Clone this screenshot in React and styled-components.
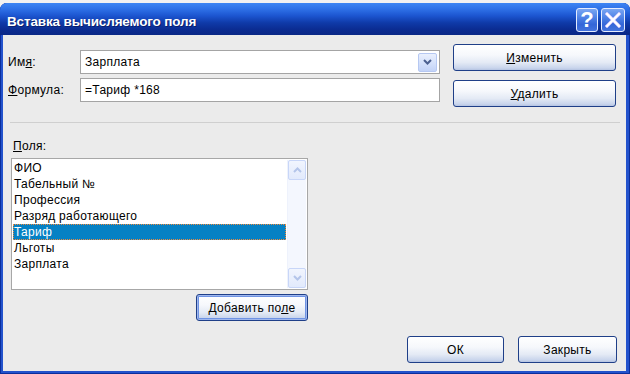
import React from "react";
import styled, { createGlobalStyle } from "styled-components";

const GlobalStyle = createGlobalStyle`
  html, body { margin: 0; padding: 0; background: #f2f2f2; }
  body { font-family: "Liberation Sans", "DejaVu Sans", sans-serif; font-size: 12px; letter-spacing: 0.3px; color: #000; }
  * { box-sizing: border-box; }
`;

const Window = styled.div`
  width: 630px;
  height: 371px;
  margin-top: 3px;
  display: flex;
  flex-direction: column;
  background: #2352cc;
  border-radius: 7px 7px 0 0;
  overflow: hidden;
  box-shadow: inset 1px 0 0 #0b2e9c, inset -1px 0 0 #0b2e9c, inset 0 -1px 0 #0b2e9c;
`;

const TitleBar = styled.div`
  height: 32px;
  flex: none;
  display: flex;
  align-items: flex-start;
  padding: 5px 5px 0 7px;
  background: linear-gradient(to bottom, #3d86f4 0%, #2f72e8 18%, #1c55d0 40%, #0f3aa8 62%, #0b2c92 82%, #0a2886 100%);
`;

const Title = styled.div`
  flex: 1;
  padding-top: 6px;
  font-family: "Liberation Sans", "DejaVu Sans", sans-serif;
  font-weight: bold;
  font-size: 13.5px;
  color: #fff;
  letter-spacing: -0.15px;
  text-shadow: 1px 1px 0 #0a1f6e;
`;

const CaptionButton = styled.div`
  width: ${(p) => p.$w}px;
  height: 24px;
  margin-left: ${(p) => p.$gap}px;
  border: 1px solid #e4ecff;
  border-radius: 3px;
  background: linear-gradient(to bottom, #7aa6f2 0%, #5286e8 35%, #3466d8 70%, #4373de 100%);
  display: flex;
  align-items: center;
  justify-content: center;
  color: #fff;
  font-family: "Liberation Sans", sans-serif;
  font-weight: bold;
  font-size: 22px;
  letter-spacing: 0;
  line-height: 1;
`;

const Body = styled.div`
  flex: 1;
  margin: 0 4px 3px 3px;
  background: #ebebeb;
  display: flex;
  flex-direction: column;
`;

const TopSection = styled.div`
  display: flex;
  gap: 13px;
  padding: 9px 10px 0 5px;
`;

const FieldGrid = styled.div`
  margin-top: 6px;
  display: grid;
  grid-template-columns: 72px 360px;
  grid-auto-rows: 24px;
  row-gap: 4px;
  align-items: center;
`;

const Label = styled.label`
  white-space: nowrap;
`;

const InputBox = styled.div`
  height: 24px;
  border: 1px solid #a4a4a4;
  background: #fff;
  display: flex;
  align-items: center;
  padding-left: 4px;
`;

const InputText = styled.span`
  flex: 1;
`;

const DropButton = styled.div`
  width: 19px;
  height: 19px;
  margin-right: 2px;
  border: 1px solid #b6c8f2;
  border-radius: 2px;
  background: linear-gradient(to bottom, #eaf0fd 0%, #d6e2fb 50%, #c3d3f7 100%);
  display: flex;
  align-items: center;
  justify-content: center;
`;

const ButtonColumn = styled.div`
  width: 163px;
  display: flex;
  flex-direction: column;
  gap: 9px;
`;

const Button = styled.button`
  width: ${(p) => p.$w || 163}px;
  height: 27px;
  padding: 0;
  border: 1px solid #1f3f88;
  border-radius: 3px;
  background: linear-gradient(to bottom, #ffffff 0%, #f6f8fc 40%, #e4eaf5 70%, #c9d5ec 92%, #b5c4e2 100%);
  font-family: "Liberation Sans", "DejaVu Sans", sans-serif;
  font-size: 12px;
  letter-spacing: 0.3px;
  color: #000;
  box-shadow: ${(p) => (p.$default ? "inset 0 0 0 1px #9fb7ee, inset 0 0 0 2px #6f93e3" : "none")};
`;

const Separator = styled.div`
  margin: 15px 6px 0 7px;
  height: 1px;
  background: #cfcfcf;
`;

const LowerSection = styled.div`
  padding-left: 8px;
  display: flex;
  flex-direction: column;
`;

const SectionLabel = styled.div`
  margin-top: 16px;
  line-height: 14px;
  padding-left: 2px;
`;

const ListColumn = styled.div`
  width: 297px;
  margin-top: 5px;
  display: flex;
  flex-direction: column;
  align-items: flex-end;
  gap: 4px;
`;

const ListBox = styled.div`
  width: 297px;
  height: 132px;
  border: 1px solid #a7a7a7;
  background: #fff;
  padding: 1px;
  display: flex;
  gap: 1px;
`;

const Items = styled.div`
  width: 273px;
  display: flex;
  flex-direction: column;
`;

const Item = styled.div`
  height: 16px;
  line-height: 16px;
  padding-left: 1px;
  white-space: nowrap;
  background: ${(p) => (p.$selected ? "#0681c4" : "transparent")};
  color: ${(p) => (p.$selected ? "#fff" : "#000")};
  outline: ${(p) => (p.$selected ? "1px dotted #f08a3c" : "none")};
  outline-offset: -1px;
`;

const ScrollBar = styled.div`
  width: 19px;
  background: #f4f7fe;
  border-left: 1px solid #eef2fc;
  display: flex;
  flex-direction: column;
  justify-content: space-between;
`;

const ScrollButton = styled.div`
  height: 20px;
  border: 1px solid #c8d6f8;
  border-radius: 2px;
  background: linear-gradient(to bottom, #f1f5fe 0%, #e2eafc 100%);
  display: flex;
  align-items: center;
  justify-content: center;
`;

const Footer = styled.div`
  margin-top: auto;
  display: flex;
  justify-content: flex-end;
  gap: 14px;
  padding: 0 9px 8px 0;
`;

const Chevron = ({ up, color }) => (
  <svg width="9" height="6" viewBox="0 0 9 6">
    <path
      d={up ? "M1 5 L4.5 1.5 L8 5" : "M1 1 L4.5 4.5 L8 1"}
      fill="none"
      stroke={color}
      strokeWidth="2"
    />
  </svg>
);

const CloseIcon = () => (
  <svg width="16" height="16" viewBox="0 0 16 16">
    <path d="M2 2 L14 14 M14 2 L2 14" stroke="#d8c8ff" strokeWidth="3.2" strokeLinecap="square" />
    <path d="M2 2 L14 14 M14 2 L2 14" stroke="#fff" strokeWidth="2" strokeLinecap="square" />
  </svg>
);

const fields = ["ФИО", "Табельный №", "Профессия", "Разряд работающего", "Тариф", "Льготы", "Зарплата"];

export default function App() {
  return (
    <>
      <GlobalStyle />
      <Window>
        <TitleBar>
          <Title>Вставка вычисляемого поля</Title>
          <CaptionButton $w={22} $gap={0}>?</CaptionButton>
          <CaptionButton $w={24} $gap={3}>
            <CloseIcon />
          </CaptionButton>
        </TitleBar>
        <Body>
          <TopSection>
            <FieldGrid>
              <Label>
                Им<u>я</u>:
              </Label>
              <InputBox>
                <InputText>Зарплата</InputText>
                <DropButton>
                  <Chevron color="#4c6090" />
                </DropButton>
              </InputBox>
              <Label>
                <u>Ф</u>ормула:
              </Label>
              <InputBox>
                <InputText>=Тариф *168</InputText>
              </InputBox>
            </FieldGrid>
            <ButtonColumn>
              <Button>
                <u>И</u>зменить
              </Button>
              <Button>
                <u>У</u>далить
              </Button>
            </ButtonColumn>
          </TopSection>
          <Separator />
          <LowerSection>
            <SectionLabel>
              <u>П</u>оля:
            </SectionLabel>
            <ListColumn>
              <ListBox>
                <Items>
                  {fields.map((f) => (
                    <Item key={f} $selected={f === "Тариф"}>
                      {f}
                    </Item>
                  ))}
                </Items>
                <ScrollBar>
                  <ScrollButton>
                    <Chevron up color="#b4c5ea" />
                  </ScrollButton>
                  <ScrollButton>
                    <Chevron color="#b4c5ea" />
                  </ScrollButton>
                </ScrollBar>
              </ListBox>
              <Button $w={112} $default>
                Добавить по<u>л</u>е
              </Button>
            </ListColumn>
          </LowerSection>
          <Footer>
            <Button $w={97}>ОК</Button>
            <Button $w={99}>Закрыть</Button>
          </Footer>
        </Body>
      </Window>
    </>
  );
}
